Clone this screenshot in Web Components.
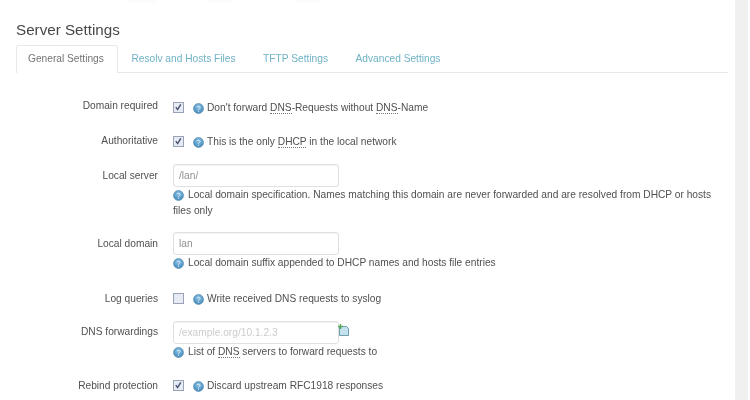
<!DOCTYPE html>
<html>
<head>
<meta charset="utf-8">
<style>
  html, body { margin: 0; background: #fff; }
  body { display: flex; width: 750px; height: 400px; overflow: hidden; font-family: "Liberation Sans", Arial, sans-serif; }
</style>
</head>
<body>
<settings-page>
  <tab-bar slot="tabs">
    <tab-item active>General Settings</tab-item>
    <tab-item>Resolv and Hosts Files</tab-item>
    <tab-item>TFTP Settings</tab-item>
    <tab-item>Advanced Settings</tab-item>
  </tab-bar>

  <form-row label="Domain required" style="--row-top:26px">
    <check-box checked></check-box>
    <help-note inline>Don't forward <abbr-word>DNS</abbr-word>-Requests without <abbr-word>DNS</abbr-word>-Name</help-note>
  </form-row>
  <form-row label="Authoritative" style="--row-top:18px;--label-top:1px">
    <check-box checked></check-box>
    <help-note inline>This is the only <abbr-word>DHCP</abbr-word> in the local network</help-note>
  </form-row>
  <form-row label="Local server" field style="--row-top:15px">
    <text-field value="/lan/"></text-field>
    <help-note>Local domain specification. Names matching this domain are never forwarded and are resolved from DHCP or hosts files only</help-note>
  </form-row>
  <form-row label="Local domain" field style="--row-top:13px">
    <text-field value="lan"></text-field>
    <help-note>Local domain suffix appended to DHCP names and hosts file entries</help-note>
  </form-row>
  <form-row label="Log queries" style="--row-top:19px;--label-top:2px">
    <check-box></check-box>
    <help-note inline>Write received DNS requests to syslog</help-note>
  </form-row>
  <form-row label="DNS forwardings" field style="--row-top:15px;--label-top:4px">
    <text-field placeholder="/example.org/10.1.2.3" add></text-field>
    <help-note>List of <abbr-word>DNS</abbr-word> servers to forward requests to</help-note>
  </form-row>
  <form-row label="Rebind protection" style="--row-top:17px;--label-top:2px">
    <check-box checked></check-box>
    <help-note inline>Discard upstream RFC1918 responses</help-note>
  </form-row>
</settings-page>
<scroll-track></scroll-track>

<script>
class SettingsPage extends HTMLElement {
  constructor() {
    super();
    this.attachShadow({ mode: 'open' }).innerHTML = `
      <style>
        :host { display: block; box-sizing: border-box; width: 735px; flex: none; padding: 0 0 0 16px; color: #505050; font-size: 10.2px; filter: blur(.4px); }
        .cut { display: flex; height: 3px; margin-bottom: 18px; padding-left: 111px; }
        .cut i { display: block; height: 3px; width: 28px; margin-right: 53px; background: #fbfbfb; }
        .cut i + i { width: 24px; margin-right: 65px; }
        h2 { margin: 0 0 7px; font-size: 15.2px; line-height: 17px; font-weight: 400; color: #484848; }
      </style>
      <div class="cut"><i></i><i></i><i></i></div>
      <h2>Server Settings</h2>
      <slot name="tabs"></slot>
      <slot></slot>
    `;
  }
}

class ScrollTrack extends HTMLElement {
  constructor() {
    super();
    this.attachShadow({ mode: 'open' }).innerHTML = `
      <style>
        :host { display: block; width: 13px; flex: none; background: #f0f0f0; }
      </style>`;
  }
}

class TabBar extends HTMLElement {
  constructor() {
    super();
    this.attachShadow({ mode: 'open' }).innerHTML = `
      <style>
        :host { display: flex; width: 712px; height: 27px; border-bottom: 1px solid #e8e8e8; }
      </style><slot></slot>`;
  }
}

class TabItem extends HTMLElement {
  constructor() {
    super();
    this.attachShadow({ mode: 'open' }).innerHTML = `
      <style>
        :host { display: block; box-sizing: border-box; height: 28px; padding: 0 13px 0 11px; border: 1px solid transparent; border-bottom: 0; line-height: 26px; font-size: 10.2px; color: #6fb2c6; white-space: nowrap; margin-right: 1.5px; }
        :host([active]) { color: #747474; background: #fff; border-color: #e8e8e8; border-radius: 3px 3px 0 0; }
      </style><slot></slot>`;
  }
}

class FormRow extends HTMLElement {
  constructor() {
    super();
    const stacked = this.hasAttribute('field');
    this.attachShadow({ mode: 'open' }).innerHTML = `
      <style>
        :host { display: grid; grid-template-columns: 142px 1fr; column-gap: 15px; margin-top: var(--row-top, 20px); width: 702px; }
        .label { text-align: right; line-height: 14px; color: #505050; padding-top: var(--label-top, ${stacked ? 5 : 0}px); }
        .body { display: ${stacked ? 'block' : 'flex'}; align-items: center; }
      </style>
      <div class="label">${this.getAttribute('label')}</div>
      <div class="body"><slot></slot></div>
    `;
  }
}

class CheckBox extends HTMLElement {
  constructor() {
    super();
    const tick = this.hasAttribute('checked')
      ? '<path d="M2.8 5.2 L4.6 7.6 L7.8 2.4" fill="none" stroke="#46506e" stroke-width="1.4"/>'
      : '';
    this.attachShadow({ mode: 'open' }).innerHTML = `
      <style>
        :host { display: block; width: 11px; height: 11px; margin-right: 9px; flex: none; }
        svg { display: block; }
      </style>
      <svg width="11" height="11" viewBox="0 0 11 11">
        <rect x=".5" y=".5" width="10" height="10" fill="#e6ebf4" stroke="#9aa3b5"/>
        ${tick}
      </svg>
    `;
  }
}

class TextField extends HTMLElement {
  constructor() {
    super();
    const value = this.getAttribute('value');
    const text = value || this.getAttribute('placeholder');
    const add = this.hasAttribute('add')
      ? `<svg class="add" width="12" height="12" viewBox="0 0 12 12">
           <path d="M1.5 2.5h7l2 2v7h-9z" fill="#c4e2ee" stroke="#6f9fb0"/>
           <path d="M2.5 0v5M0 2.5h5" stroke="#58a858" stroke-width="1.4"/>
         </svg>`
      : '';
    this.attachShadow({ mode: 'open' }).innerHTML = `
      <style>
        :host { display: flex; align-items: flex-start; height: 24px; }
        .box { box-sizing: border-box; width: 166px; height: 23px; padding: 0 5px; border: 1px solid #e0e0e0; border-radius: 3px; line-height: 22px; font-size: 10.2px; color: ${value ? '#909090' : '#cccccc'}; box-shadow: inset 0 1px 1px rgba(0,0,0,.05); white-space: nowrap; overflow: hidden; }
        .add { margin: 3px 0 0 -1px; display: block; }
      </style>
      <div class="box">${text}</div>${add}
    `;
  }
}

class HelpNote extends HTMLElement {
  constructor() {
    super();
    this.attachShadow({ mode: 'open' }).innerHTML = `
      <style>
        :host { display: block; line-height: 16px; color: #505050; margin-top: -1px; }
        :host([inline]) { margin-top: 1px; margin-bottom: -1px; }
        svg { vertical-align: -3px; margin-right: 4px; }
        :host([inline]) svg { margin-right: 3px; }
      </style><svg width="11" height="11" viewBox="0 0 11 11">
        <defs><radialGradient id="g" cx=".5" cy=".35" r=".7"><stop offset="0" stop-color="#8cc4e8"/><stop offset="1" stop-color="#3f83b4"/></radialGradient></defs>
        <circle cx="5.5" cy="5.5" r="5" fill="url(#g)" stroke="#4f86ab" stroke-width=".6"/>
        <path d="M3.8 4.2c.2-1.3 3.2-1.4 3.3.2 0 1.1-1.5 1-1.6 2.2" fill="none" stroke="#dceef8" stroke-width="1"/>
        <circle cx="5.5" cy="8.2" r=".6" fill="#dceef8"/>
      </svg><slot></slot>`;
  }
}

class AbbrWord extends HTMLElement {
  constructor() {
    super();
    this.attachShadow({ mode: 'open' }).innerHTML = `
      <style>
        :host { display: inline; border-bottom: 1px dotted #777; }
      </style><slot></slot>`;
  }
}

customElements.define('settings-page', SettingsPage);
customElements.define('scroll-track', ScrollTrack);
customElements.define('tab-bar', TabBar);
customElements.define('tab-item', TabItem);
customElements.define('form-row', FormRow);
customElements.define('check-box', CheckBox);
customElements.define('text-field', TextField);
customElements.define('help-note', HelpNote);
customElements.define('abbr-word', AbbrWord);
</script>
</body>
</html>
